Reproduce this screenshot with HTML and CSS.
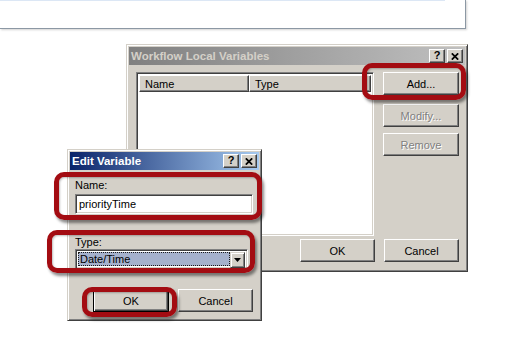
FILE: index.html
```html
<!DOCTYPE html>
<html>
<head>
<meta charset="utf-8">
<link rel="stylesheet" href="styles.css">
</head>
<body>
<div class="page">
  <div class="banner"><div class="banner-rule"></div></div>

  <section class="win win-main">
    <div class="titlebar inactive">
      <span class="title">Workflow Local Variables</span>
      <div class="tb-btns">
        <span class="tb-btn help">?</span>
        <span class="tb-btn close"><svg width="8" height="7" viewBox="0 0 8 7"><path d="M0.8 0.3L7.2 6.7M7.2 0.3L0.8 6.7" stroke="#000" stroke-width="1.7"/></svg></span>
      </div>
    </div>
    <div class="main-body">
      <div class="main-top">
        <div class="list sunken">
          <div class="list-head">
            <div class="col col-name">Name</div>
            <div class="col col-type">Type</div>
          </div>
        </div>
        <div class="side-btns">
          <div class="btn btn-add">Add...</div>
          <div class="btn disabled btn-modify">Modify...</div>
          <div class="btn disabled btn-remove">Remove</div>
        </div>
      </div>
      <div class="btn-row">
        <div class="btn">OK</div>
        <div class="btn">Cancel</div>
      </div>
    </div>
  </section>

  <section class="win win-edit">
    <div class="titlebar active">
      <span class="title">Edit Variable</span>
      <div class="tb-btns">
        <span class="tb-btn help">?</span>
        <span class="tb-btn close"><svg width="8" height="7" viewBox="0 0 8 7"><path d="M0.8 0.3L7.2 6.7M7.2 0.3L0.8 6.7" stroke="#000" stroke-width="1.7"/></svg></span>
      </div>
    </div>
    <div class="edit-body">
      <div class="label">Name:</div>
      <div class="field sunken">priorityTime</div>
      <div class="label label-type">Type:</div>
      <div class="combo sunken">
        <div class="combo-sel"><span class="combo-focus">Date/Time</span></div>
        <div class="combo-btn"><svg width="7" height="4" viewBox="0 0 7 4"><path d="M0 0h7L3.5 4z" fill="#000"/></svg></div>
      </div>
      <div class="btn-row edit-btns">
        <div class="btn default">OK</div>
        <div class="btn">Cancel</div>
      </div>
    </div>
  </section>

  <div class="callout callout-add"></div>
  <div class="callout callout-name"></div>
  <div class="callout callout-type"></div>
  <div class="callout callout-ok"></div>
</div>
</body>
</html>
```

FILE: styles.css
```css
html, body {
  margin: 0;
  padding: 0;
  background: #ffffff;
}

.page {
  position: relative;
  width: 505px;
  height: 346px;
  overflow: hidden;
  font-family: "Liberation Sans", Arial, sans-serif;
  font-size: 11px;
  color: #000;
}

.banner {
  width: 466px;
  height: 29px;
  box-sizing: border-box;
  background: #fff;
  border-right: 1px solid #8c98a4;
  border-bottom: 1px solid #8c98a4;
  box-shadow: 1px 1px 2px rgba(0, 0, 0, 0.18);
}

.banner-rule {
  width: 445px;
  height: 1px;
  background: #dce7f5;
}

/* windows */
.win {
  position: absolute;
  box-sizing: border-box;
  background: #d4d0c8;
  border: 1px solid;
  border-color: #d4d0c8 #404040 #404040 #d4d0c8;
  box-shadow: inset 1px 1px #fff, inset -1px -1px #808080;
  padding: 2px;
  display: flex;
  flex-direction: column;
}

.win-main {
  left: 126px;
  top: 44px;
  width: 342px;
  height: 228px;
}

.win-edit {
  left: 67px;
  top: 149px;
  width: 195px;
  height: 172px;
}

.titlebar {
  height: 18px;
  display: flex;
  align-items: center;
  padding: 0 2px 0 2px;
  flex: none;
}

.titlebar.inactive {
  background: linear-gradient(to right, #808080, #c0c0c0);
  color: #d4d0c8;
}

.titlebar.active {
  background: linear-gradient(to right, #0a246a, #a6caf0);
  color: #fff;
}

.title {
  font-weight: bold;
  font-size: 11.5px;
  flex: 1;
  white-space: nowrap;
  padding-left: 0;
  line-height: 18px;
}

.tb-btns {
  display: flex;
  gap: 2px;
}

.tb-btn {
  box-sizing: border-box;
  width: 16px;
  height: 14px;
  background: #d4d0c8;
  border: 1px solid;
  border-color: #fff #404040 #404040 #fff;
  box-shadow: inset -1px -1px #808080;
  display: flex;
  align-items: center;
  justify-content: center;
  color: #000;
  font-weight: bold;
  font-size: 11px;
  line-height: 1;
}

.tb-btn.help {
  padding-bottom: 1px;
}

/* common controls */
.sunken {
  box-sizing: border-box;
  border: 1px solid;
  border-color: #808080 #fff #fff #808080;
  box-shadow: inset 1px 1px #404040, inset -1px -1px #d4d0c8;
}

.btn {
  box-sizing: border-box;
  height: 23px;
  background: #d4d0c8;
  border: 1px solid;
  border-color: #fff #404040 #404040 #fff;
  box-shadow: inset -1px -1px #808080;
  display: flex;
  align-items: center;
  justify-content: center;
  color: #000;
  font-size: 11px;
}

.btn.disabled {
  color: #808080;
  text-shadow: 1px 1px 0 #fff;
}

.btn.default {
  border-color: #000;
  box-shadow: inset 1px 1px #fff, inset -1px -1px #404040, inset -2px -2px #808080;
}

.btn-row {
  display: flex;
  justify-content: flex-end;
  gap: 9px;
}

/* main dialog */
.main-body {
  flex: 1;
  display: flex;
  flex-direction: column;
  padding: 7px 6px 7px 7px;
}

.main-top {
  display: flex;
  gap: 9px;
}

.list {
  flex: 1;
  height: 164px;
  background: #fff;
  padding: 2px;
}

.list-head {
  display: flex;
  height: 17px;
}

.col {
  box-sizing: border-box;
  height: 17px;
  background: #d4d0c8;
  border: 1px solid;
  border-color: #fff #404040 #404040 #fff;
  box-shadow: inset -1px -1px #808080;
  padding-left: 5px;
  display: flex;
  align-items: center;
}

.col-name {
  width: 110px;
}

.col-type {
  flex: 1;
}

.side-btns {
  width: 76px;
  display: flex;
  flex-direction: column;
}

.btn-modify {
  margin-top: 9px;
}

.btn-remove {
  margin-top: 6px;
}

.main-body .btn-row {
  margin-top: 3px;
}

.main-body .btn-row .btn {
  width: 75px;
}

/* edit dialog */
.edit-body {
  flex: 1;
  display: flex;
  flex-direction: column;
  padding: 9px 6px 6px 5px;
}

.label {
  height: 13px;
  line-height: 13px;
}

.field {
  margin-top: 2px;
  height: 20px;
  background: #fff;
  padding: 0 3px;
  display: flex;
  align-items: center;
}

.label-type {
  margin-top: 22px;
}

.combo {
  width: 173px;
  height: 20px;
  background: #fff;
  padding: 2px;
  display: flex;
}

.combo-sel {
  flex: 1;
  background: #a5b1cd;
  outline: 1px dotted #1a1a1a;
  outline-offset: -1px;
  display: flex;
  align-items: center;
  padding-left: 2px;
}

.combo-btn {
  box-sizing: border-box;
  width: 15px;
  height: 16px;
  background: #d4d0c8;
  border: 1px solid;
  border-color: #d4d0c8 #404040 #404040 #d4d0c8;
  box-shadow: inset 1px 1px #fff, inset -1px -1px #808080;
  display: flex;
  align-items: center;
  justify-content: center;
}

.edit-btns {
  margin-top: 20px;
}

.edit-btns .btn:first-child {
  width: 76px;
}

.edit-btns .btn:last-child {
  width: 75px;
}

/* red annotation outlines */
.callout {
  position: absolute;
  box-sizing: border-box;
  border: 5px solid #a30c12;
  border-radius: 10px;
  box-shadow: 2px 3px 3px rgba(0, 0, 0, 0.45), inset 1px 1px 2px rgba(0, 0, 0, 0.25);
}

.callout-add {
  left: 362px;
  top: 63px;
  width: 104px;
  height: 37px;
}

.callout-name {
  left: 54px;
  top: 172px;
  width: 208px;
  height: 48px;
}

.callout-type {
  left: 47px;
  top: 230px;
  width: 208px;
  height: 43px;
}

.callout-ok {
  left: 82px;
  top: 287px;
  width: 95px;
  height: 30px;
}
```
